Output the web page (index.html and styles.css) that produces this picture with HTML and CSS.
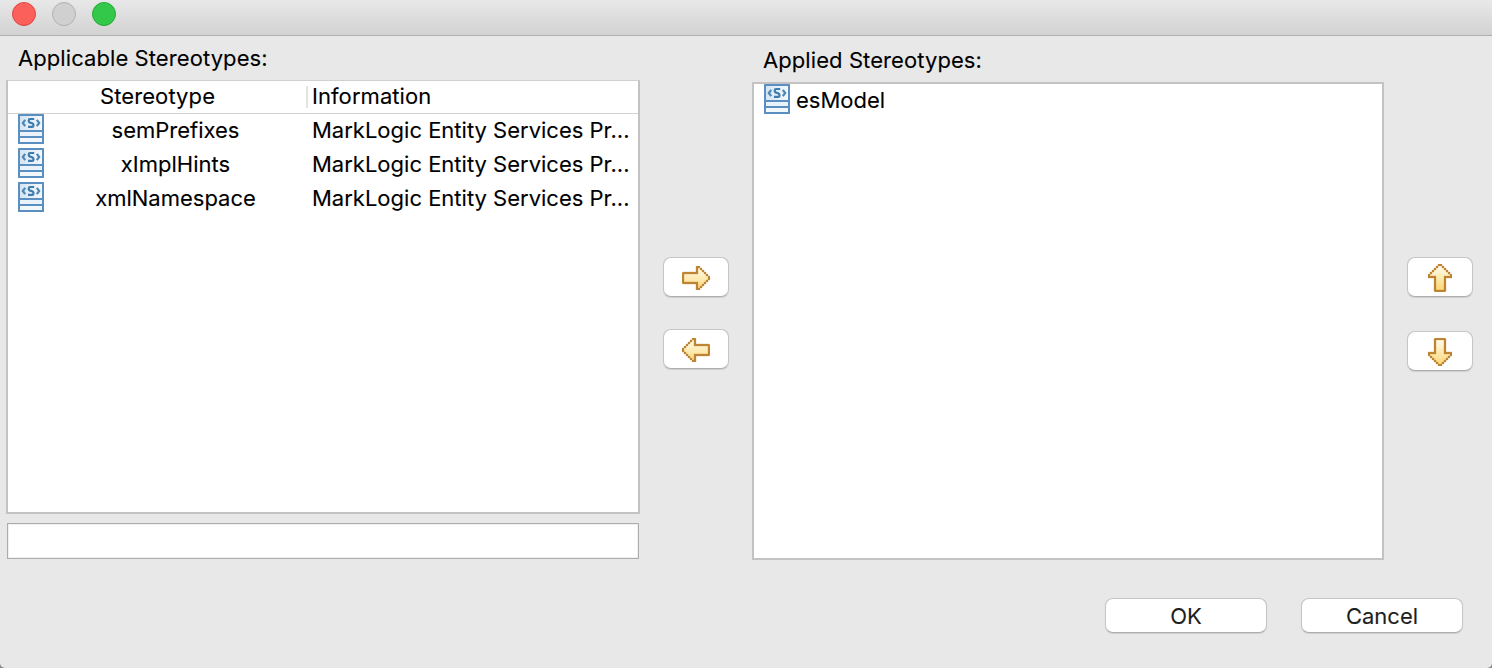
FILE: index.html
```html
<!DOCTYPE html>
<html lang="en">
<head>
<meta charset="utf-8">
<title>Stereotypes</title>
<link rel="stylesheet" href="styles.css">
</head>
<body>
<svg class="defs" width="0" height="0" aria-hidden="true">
  <defs>
    <linearGradient id="down" x1="0" y1="0" x2="0" y2="1"><stop offset="0" stop-color="#fffdf0"/><stop offset="1" stop-color="#fbd97c"/></linearGradient>
    <linearGradient id="toLeft" x1="1" y1="0" x2="0" y2="0"><stop offset="0" stop-color="#fffdf0"/><stop offset="1" stop-color="#fbd672"/></linearGradient>
    <linearGradient id="toRight" x1="0" y1="0" x2="1" y2="0"><stop offset="0" stop-color="#fffdf0"/><stop offset="1" stop-color="#fbd672"/></linearGradient>
    <path id="body" d="M.5 3.5H7.5V.5H8.5L13.5 5.5V6.5L8.5 11.5H7.5V8.5H.5Z"/>
    <path id="edge" d="M7 0h2v1h1v1h1v1h1v1h1v1h1v2h-1v1h-1v1h-1v1h-1v1h-1v1h-2v-3h-6.500l-.5-.5v-5l.5-.5h6.500zM8 1v3h-7v4h7v3h1v-1h1v-1h1v-1h1v-1h1v-2h-1v-1h-1v-1h-1v-1h-1v-1z" fill-rule="evenodd"/>
    <linearGradient id="head" x1="0" y1="0" x2="1" y2="0"><stop offset="0" stop-color="#d5e5f3"/><stop offset="1" stop-color="#f4f8fc"/></linearGradient>
    <symbol id="stereo" viewBox="0 0 26 30">
      <rect width="26" height="30" rx=".6" fill="#5b8fc2"/>
      <rect x="2" y="2" width="22" height="14" fill="url(#head)"/>
      <rect x="2" y="18" width="22" height="4" fill="#eaf2fb"/>
      <rect x="2" y="24" width="22" height="4" fill="#f2f7fc"/>
      <path d="M7.200 5.800L4.800 9L7.200 12.200M18.800 5.800L21.200 9L18.800 12.200" fill="none" stroke="#4e88b6" stroke-width="2.200"/>
      <path d="M16.200 5H12Q10.800 5 10.800 6.300V7.200Q10.800 8.300 12 8.600L14.200 9.200Q15.400 9.600 15.400 10.800V11.500Q15.400 12.900 14 12.900H10" fill="none" stroke="#3d7cae" stroke-width="2.200"/>
    </symbol>
  </defs>
</svg>
<div class="window">
  <header class="titlebar"><i class="light close"></i><i class="light minimize"></i><i class="light expand"></i></header>
  <main class="content">
    <section class="available">
      <h2 class="label label-available">Applicable Stereotypes:</h2>
      <div class="table">
        <div class="thead"><span class="name">Stereotype</span><span class="info">Information</span></div>
        <div class="row"><svg class="icon"><use href="#stereo"/></svg><span class="name">semPrefixes</span><span class="info">MarkLogic Entity Services Pr...</span></div>
        <div class="row"><svg class="icon"><use href="#stereo"/></svg><span class="name">xImplHints</span><span class="info">MarkLogic Entity Services Pr...</span></div>
        <div class="row"><svg class="icon"><use href="#stereo"/></svg><span class="name">xmlNamespace</span><span class="info">MarkLogic Entity Services Pr...</span></div>
      </div>
      <input class="filter" type="text" aria-label="Filter">
    </section>
    <div class="actions transfer">
      <button class="square" aria-label="Add"><svg width="28" height="24" viewBox="0 0 14 12"><use href="#body" fill="url(#down)"/><use class="edge" href="#edge"/></svg></button>
      <button class="square" aria-label="Remove"><svg width="28" height="24" viewBox="0 0 14 12"><g transform="translate(14 0) scale(-1 1)"><use href="#body" fill="url(#down)"/><use class="edge" href="#edge"/></g></svg></button>
    </div>
    <section class="applied">
      <h2 class="label label-applied">Applied Stereotypes:</h2>
      <div class="list"><div class="item"><svg class="icon"><use href="#stereo"/></svg><span>esModel</span></div></div>
    </section>
    <div class="actions order">
      <button class="square" aria-label="Move up"><svg width="24" height="28" viewBox="0 0 12 14"><g transform="translate(0 14) rotate(-90)"><use href="#body" fill="url(#toLeft)"/><use class="edge" href="#edge"/></g></svg></button>
      <button class="square" aria-label="Move down"><svg width="24" height="28" viewBox="0 0 12 14"><g transform="translate(12 0) rotate(90)"><use href="#body" fill="url(#toRight)"/><use class="edge" href="#edge"/></g></svg></button>
    </div>
  </main>
  <footer class="footer"><button class="push">OK</button><button class="push">Cancel</button></footer>
</div>
</body>
</html>
```
FILE: styles.css
```css
* { box-sizing: border-box; }
body { margin: 0; background: #8a8a8a; }
.defs { position: absolute; }
.window {
  width: 1492px; height: 668px; overflow: hidden;
  display: flex; flex-direction: column;
  background: #e8e8e8; color: #000;
  border-radius: 0 0 5px 5px;
  font: 22px/34px Inter, "Liberation Sans", sans-serif;
  -webkit-text-stroke: .1px currentColor;
}
.titlebar {
  height: 36px; flex: none; display: flex; gap: 16px; padding: 2px 12px;
  background: linear-gradient(#e8e8e8, #d2d2d2); border-bottom: 1px solid #b0b0b0;
}
.light { width: 24px; height: 24px; border-radius: 50%; border: 1px solid; }
.close { background: #fc605b; border-color: #df4744; }
.minimize { background: #d0d0d0; border-color: #b1b1b1; }
.expand { background: #34c84a; border-color: #26aa35; }
.content { height: 524px; flex: none; display: flex; align-items: flex-start; padding-left: 6px; }
.available { width: 634px; display: flex; flex-direction: column; }
.label { margin: 0; font-size: inherit; font-weight: 400; white-space: nowrap; letter-spacing: .08px; }
.label-available { height: 44px; padding: 5px 0 0 12px; }
.label-applied { height: 46px; padding: 7px 0 0 11px; }
.table { height: 434px; background: #fff; border: 2px solid #c3c3c3; border-top: 1px solid #d0d0d0; }
.thead { display: flex; height: 33px; border-bottom: 1px solid #d2d2d2; align-items: center; }
.thead .name { width: 300px; height: 22px; line-height: 20px; padding-left: 1px; border-right: 2px solid #e3e3e3; letter-spacing: .1px; }
.thead .info { height: 22px; line-height: 20px; padding-left: 4px; letter-spacing: .07px; }
.row { display: flex; height: 34px; line-height: 32px; }
.icon { width: 26px; height: 30px; flex: none; }
.row .icon { margin-left: 10px; }
.name { text-align: center; }
.row .name { width: 263px; }
.info { white-space: nowrap; }
.row .info { padding-left: 5px; }
.filter { width: 632px; height: 36px; margin: 9px 0 0 1px; padding: 0 8px; border: 1px solid #acacac; background: #fff; box-shadow: inset 0 0 0 1px #f0f0f0; font: inherit; }
.actions { display: flex; flex-direction: column; }
.transfer { margin: 221px 23px 0; gap: 32px; }
.order { margin: 221px 0 0 23px; gap: 34px; }
button { margin: 0; padding: 0; border: 1px solid #c6c6c6; border-bottom-color: #adadad; border-radius: 8px; background: #fff; box-shadow: 0 1px 1px #cfcfcf; }
.square { width: 66px; height: 40px; display: flex; align-items: center; justify-content: center; padding-top: 2px; }
.edge { fill: #bd8634; stroke: #bd8634; stroke-width: .15px; }
.applied { width: 632px; }
.list { height: 478px; background: #fff; border: 2px solid #c3c3c3; padding-left: 10px; }
.item { display: flex; gap: 6px; height: 34px; line-height: 32px; }
.footer { display: flex; justify-content: flex-end; gap: 34px; padding: 38px 29px 0 0; }
.push { width: 162px; height: 35px; padding-top: 1px; font: 22px/32px Inter, "Liberation Sans", sans-serif; color: #1e1e1e; }
```
